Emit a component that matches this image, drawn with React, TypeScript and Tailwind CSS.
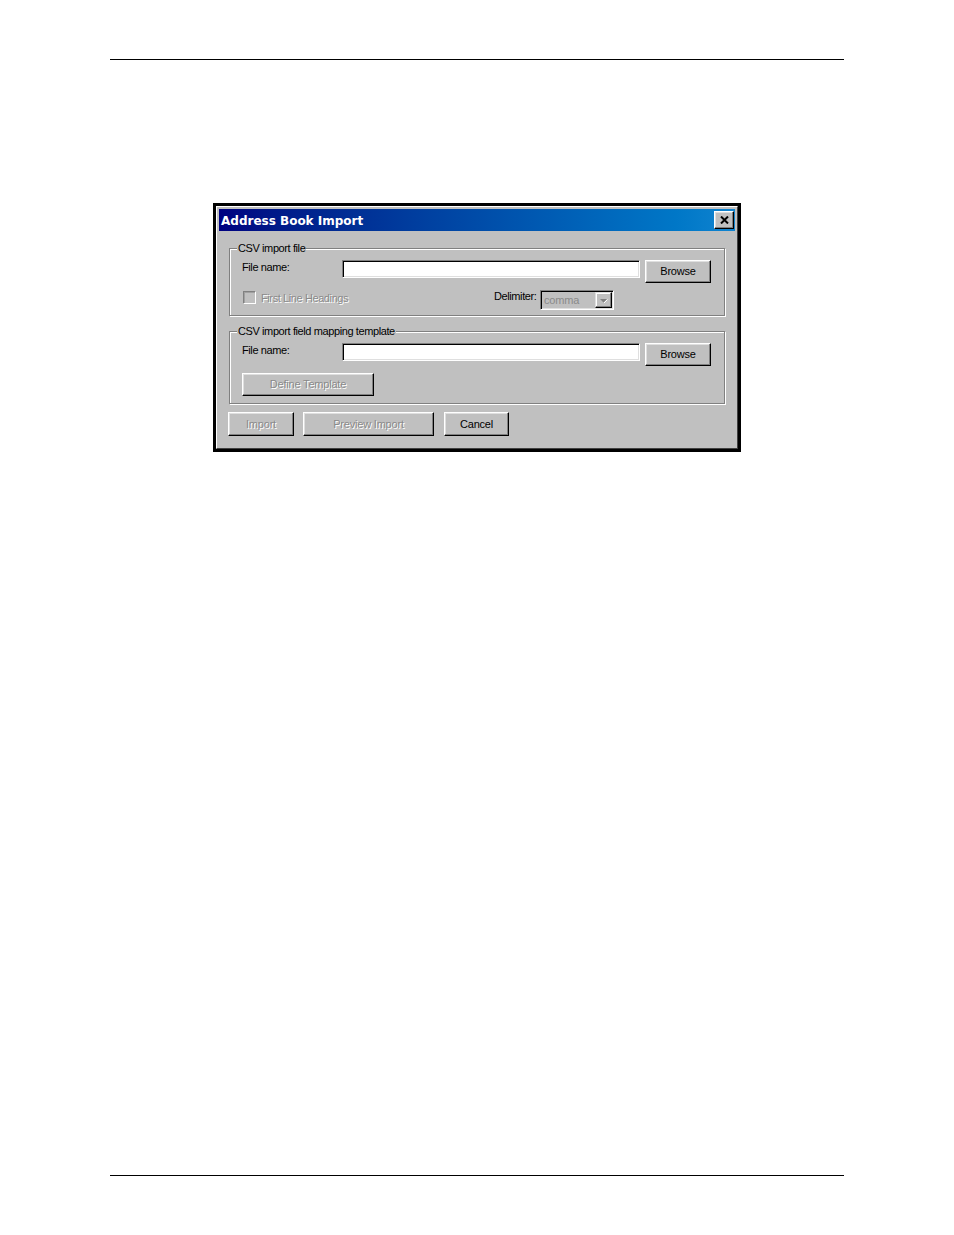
import React from "react";

const font = { fontFamily: '"Liberation Sans", Arial, sans-serif' };

function Btn({ w, label, disabled, h = "h-[23px]" }: { w: string; label: string; disabled?: boolean; h?: string }) {
  return (
    <div
      className={`${w} ${h} flex items-center justify-center bg-[#c0c0c0] border border-t-white border-l-white border-r-black border-b-black shadow-[inset_-1px_-1px_0_#808080,inset_1px_1px_0_#dfdfdf] text-[11px] tracking-[-0.2px] ${
        disabled ? "text-[#8a8a8a] [text-shadow:1px_1px_0_#ffffff]" : "text-black"
      }`}
    >
      {label}
    </div>
  );
}

function Input() {
  return (
    <div className="w-[298px] h-[18px] bg-white border border-t-[#808080] border-l-[#808080] border-r-white border-b-white shadow-[inset_1px_1px_0_#000000,inset_-1px_-1px_0_#dfdfdf]" />
  );
}

function Group({ title, className, children }: { title: string; className: string; children: React.ReactNode }) {
  return (
    <div
      className={`relative mx-[10px] border border-[#808080] shadow-[inset_1px_1px_0_#ffffff,1px_1px_0_#ffffff] ${className}`}
    >
      <div className="absolute left-[7px] top-[-8px] bg-[#c0c0c0] px-[1px] text-[11px] leading-[14px] tracking-[-0.4px] text-black">
        {title}
      </div>
      {children}
    </div>
  );
}

export default function App() {
  return (
    <div className="w-[954px] h-[1235px] bg-white pt-[59px]" style={font}>
      <div className="mx-[110px] h-px bg-black" />
      <div className="ml-[213px] mt-[143px] w-[528px] h-[249px] border-[3px] border-black">
        <div className="h-full border border-white border-r-[#404040] border-b-[#404040]">
          <div className="h-full bg-[#c0c0c0] p-[2px] flex flex-col">
            {/* Title bar */}
            <div className="h-[22px] shrink-0 flex items-center justify-between bg-gradient-to-r from-[#000080] to-[#1084d0] pl-[2px] pr-[1px]">
              <span
                className="text-white font-bold text-[12px] tracking-[0px] pt-[2px]"
                style={{ fontFamily: '"DejaVu Sans", Verdana, sans-serif' }}
              >
                Address Book Import
              </span>
              <div className="w-[20px] h-[18px] flex items-center justify-center bg-[#c0c0c0] border border-t-white border-l-white border-r-black border-b-black shadow-[inset_-1px_-1px_0_#808080,inset_1px_1px_0_#dfdfdf]">
                <svg width="9" height="8" viewBox="0 0 9 8">
                  <path d="M1 0.5 L8 7.5 M8 0.5 L1 7.5" stroke="#000" strokeWidth="2" />
                </svg>
              </div>
            </div>

            {/* Group 1 */}
            <Group title="CSV import file" className="mt-[17px] h-[68px] pt-[11px]">
              <div className="flex items-start">
                <div className="w-[112px] pl-[12px] text-[11px] leading-[14px] tracking-[-0.4px] text-black">
                  File name:
                </div>
                <Input />
                <div className="ml-[5px]">
                  <Btn w="w-[66px]" label="Browse" />
                </div>
              </div>
              <div className="mt-[7px] flex items-start pl-[13px]">
                <div className="mt-[1px] w-[13px] h-[13px] border border-t-[#808080] border-l-[#808080] border-r-white border-b-white shadow-[inset_1px_1px_0_#a0a0a0]" />
                <div className="ml-[5px] w-[233px] mt-[1px] text-[11px] leading-[14px] tracking-[-0.4px] text-[#8a8a8a] [text-shadow:1px_1px_0_#ffffff]">
                  First Line Headings
                </div>
                <div className="w-[46px] text-[11px] leading-[12px] tracking-[-0.4px] text-black">Delimiter:</div>
                <div className="w-[74px] h-[20px] flex items-center justify-between border border-t-[#808080] border-l-[#808080] border-r-white border-b-white shadow-[inset_1px_1px_0_#000000,inset_-1px_-1px_0_#dfdfdf] pl-[3px] pr-[1px]">
                  <span className="text-[11px] tracking-[-0.2px] text-[#8a8a8a]">comma</span>
                  <div className="w-[17px] h-[16px] flex items-center justify-center bg-[#c0c0c0] border border-t-[#dfdfdf] border-l-[#dfdfdf] border-r-black border-b-black shadow-[inset_-1px_-1px_0_#808080,inset_1px_1px_0_#ffffff]">
                    <svg width="9" height="6" viewBox="0 0 9 6" className="mt-[1px]">
                      <path d="M1 1 L8 1 L4.5 4.5 Z" fill="#808080" />
                      <path d="M5 5 L8.5 1.5" stroke="#ffffff" strokeWidth="1" />
                    </svg>
                  </div>
                </div>
              </div>
            </Group>

            {/* Group 2 */}
            <Group title="CSV import field mapping template" className="mt-[15px] h-[73px] pt-[11px]">
              <div className="flex items-start">
                <div className="w-[112px] pl-[12px] text-[11px] leading-[14px] tracking-[-0.4px] text-black">
                  File name:
                </div>
                <Input />
                <div className="ml-[5px]">
                  <Btn w="w-[66px]" label="Browse" />
                </div>
              </div>
              <div className="mt-[7px] pl-[12px]">
                <Btn w="w-[132px]" label="Define Template" disabled />
              </div>
            </Group>

            {/* Bottom buttons */}
            <div className="mt-[8px] flex pl-[9px]">
              <Btn w="w-[66px]" h="h-[24px]" label="Import" disabled />
              <div className="ml-[9px]">
                <Btn w="w-[131px]" h="h-[24px]" label="Preview Import" disabled />
              </div>
              <div className="ml-[10px]">
                <Btn w="w-[65px]" h="h-[24px]" label="Cancel" />
              </div>
            </div>
          </div>
        </div>
      </div>
      <div className="mx-[110px] mt-[723px] h-px bg-black" />
    </div>
  );
}
